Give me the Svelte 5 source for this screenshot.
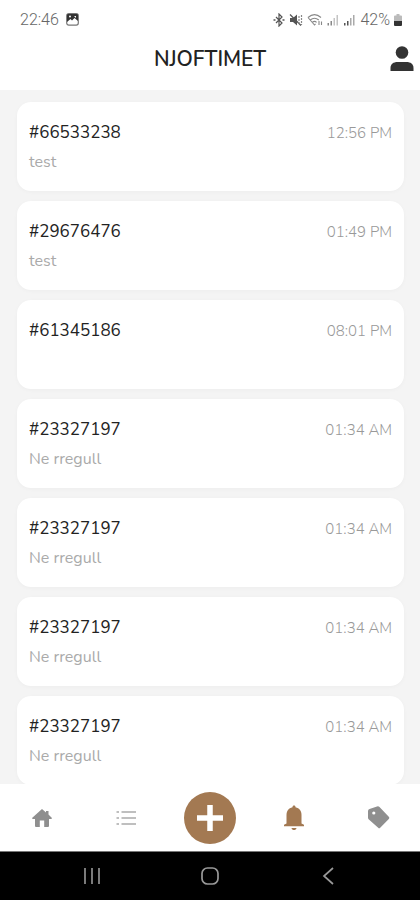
<script>
  const notices = [
    { id: '#66533238', time: '12:56 PM', text: 'test' },
    { id: '#29676476', time: '01:49 PM', text: 'test' },
    { id: '#61345186', time: '08:01 PM', text: '' },
    { id: '#23327197', time: '01:34 AM', text: 'Ne rregull' },
    { id: '#23327197', time: '01:34 AM', text: 'Ne rregull' },
    { id: '#23327197', time: '01:34 AM', text: 'Ne rregull' },
    { id: '#23327197', time: '01:34 AM', text: 'Ne rregull' }
  ];
</script>

<div class="screen">
  <div class="status">
    <span>22:46</span>
    <svg class="photo" width="13" height="13" viewBox="0 0 13 13">
      <rect x="0.7" y="0.7" width="11.6" height="11.4" rx="2" fill="#fff" stroke="#777" stroke-width="1.2" />
      <path d="M1 2a1 1 0 0 1 1-1h9a1 1 0 0 1 1 1v6L8.500 5 6 7.500 4.500 6 1 9z" fill="#333" />
      <circle cx="4" cy="3.600" r="1" fill="#fff" />
      <path d="M8 3h2v2z" fill="#fff" />
    </svg>
    <div class="signals">
      <svg width="12" height="14" viewBox="0 0 12 14" fill="none" stroke="#555" stroke-width="1.2">
        <path d="M3 4l6 6-3 3V1l3 3-6 6" />
        <path d="M0.500 7h2M9.500 7h2" stroke-width="1.6" />
      </svg>
      <svg width="14" height="14" viewBox="0 0 14 14">
        <path d="M1 5h3l4-3.500v11L4 9H1z" fill="#555" />
        <path d="M1 1.500l11 11" fill="none" stroke="#555" stroke-width="1.3" />
        <path d="M10 3v8M12.500 2v10" fill="none" stroke="#888" stroke-width="1.2" stroke-dasharray="2 1" />
      </svg>
      <svg width="16" height="14" viewBox="0 0 16 14" fill="none" stroke="#888" stroke-width="1.1">
        <path d="M1 4.500C5 1 10 1 14 4.500M3.200 7c3-2.400 5.600-2.400 8.600 0M5.400 9.300c1.500-1.200 2.800-1.200 4.200 0" />
        <path d="M1 4.500l6.500 7.500 1-1.200M12 8v4M14.500 8.500v3.500" />
      </svg>
      <svg width="12" height="14" viewBox="0 0 12 14">
        <path d="M0.500 10h1.500v2.500H0.500zM3.500 8H5v4.500H3.500z" fill="#888" />
        <path d="M6.500 5H8v7.500H6.500zM9.500 2H11v10.500H9.500z" fill="#c4c4c4" />
      </svg>
      <svg width="13" height="14" viewBox="0 0 12 14">
        <path d="M0.500 10h1.500v2.500H0.500zM3.500 8H5v4.500H3.500z" fill="#555" />
        <path d="M6.500 5H8v7.500H6.500zM9.500 2H11v10.500H9.500z" fill="#aaa" />
      </svg>
      <span>42%</span>
      <svg width="8" height="14" viewBox="0 0 8 14">
        <path d="M2.500 1h3v1.500H7a1 1 0 0 1 1 1V8H0V3.500a1 1 0 0 1 1-1h1.500z" fill="#bbb" />
        <path d="M0 8h8v4a1 1 0 0 1-1 1H1a1 1 0 0 1-1-1z" fill="#333" />
      </svg>
    </div>
  </div>

  <header>
    <h1>NJOFTIMET</h1>
    <button class="profile" aria-label="Profili">
      <svg width="24" height="26" viewBox="0 0 24 26" fill="#333">
        <circle cx="12" cy="6.500" r="6.300" />
        <path d="M0.500 25v-3c0-4 3-6 7-6h9c4 0 7 2 7 6v3z" />
      </svg>
    </button>
  </header>

  <main>
    {#each notices as n}
      <article>
        <div class="top">
          <h2>{n.id}</h2>
          <time>{n.time}</time>
        </div>
        <p>{n.text}</p>
      </article>
    {/each}
  </main>

  <nav>
    <button aria-label="Kreu">
      <svg width="20" height="18" viewBox="0 0 20 18" fill="#8f8f8f">
        <path d="M10 0l4 3.400V2h2.500v3.600L20 9l-0.600 1H17v7a1 1 0 0 1-1 1h-3.800v-6.500H7.800V18H4a1 1 0 0 1-1-1v-7H0.600L0 9z" />
      </svg>
    </button>
    <button aria-label="Lista">
      <svg width="20" height="16" viewBox="0 0 20 16" fill="none" stroke="#aaa" stroke-width="1.4">
        <path d="M0.500 2H3M5.500 2H20M0.500 8H3M5.500 8H20M0.500 14H3M5.500 14H20" />
      </svg>
    </button>
    <button class="add" aria-label="Shto">
      <svg width="28" height="28" viewBox="0 0 28 28" fill="none" stroke="#fff" stroke-width="5.500">
        <path d="M14 1v26M1 14h26" />
      </svg>
    </button>
    <button aria-label="Njoftimet">
      <svg width="22" height="26" viewBox="0 0 22 26" fill="#a37952">
        <path d="M11 0.500c1 0 1.500 0.600 1.500 1.700 4 0.800 6 3.800 6 7.800v8.500l2.500 1.300v1.400H1v-1.400l2.500-1.300V10c0-4 2-7 6-7.800 0-1.100 0.500-1.700 1.500-1.700z" />
        <path d="M8.500 23h5c-0.300 1.500-1.200 2-2.500 2s-2.200-0.500-2.500-2z" />
      </svg>
    </button>
    <button aria-label="Oferta">
      <svg width="23" height="23" viewBox="0 0 23 23">
        <path d="M1 5Q1 3.500 2.500 2.900l7.500-2.500Q11.500 0 12.500 0.900l9.500 10.100q0.800 1-0.200 2l-8.600 8.800q-1 1-2 0l-9.600-8.500Q1 12.700 1 11.500z" fill="#8f8f8f" />
        <circle cx="6.800" cy="7" r="1.600" fill="#fff" />
      </svg>
    </button>
  </nav>

  <div class="system">
    <button aria-label="Aplikacionet e fundit">
      <svg width="18" height="18" viewBox="0 0 18 18" stroke="#999" stroke-width="1.6"><path d="M2 1v16M9 1v16M16 1v16" /></svg>
    </button>
    <button aria-label="Ekrani kryesor">
      <svg width="18" height="18" viewBox="0 0 18 18" fill="none" stroke="#999" stroke-width="1.700"><rect x="1" y="1" width="16" height="16" rx="5.500" /></svg>
    </button>
    <button aria-label="Prapa">
      <svg width="18" height="18" viewBox="0 0 18 18" fill="none" stroke="#999" stroke-width="1.700"><path d="M14 1L5 9l9 8" /></svg>
    </button>
  </div>
</div>

<style>
  :global(body) {
    margin: 0;
  }
  .screen {
    height: 100vh;
    display: flex;
    flex-direction: column;
    background: #fff;
    font-family: Nunito, Inter, sans-serif;
  }
  button {
    border: 0;
    padding: 0;
    background: none;
    display: flex;
    align-items: center;
    justify-content: center;
  }
  .status {
    height: 39px;
    flex: none;
    display: flex;
    align-items: center;
    gap: 7px;
    padding: 0 18px 0 20px;
    font: 300 16px/20px Roboto, sans-serif;
    color: #666;
  }
  .signals {
    margin-left: auto;
    display: flex;
    align-items: center;
    gap: 4px;
  }
  header {
    height: 51px;
    flex: none;
    display: grid;
    grid-template-columns: 1fr auto 1fr;
    align-items: start;
    padding: 7px 6px 0;
    box-sizing: border-box;
  }
  h1 {
    grid-column: 2;
    margin: 0;
    font-size: 21px;
    line-height: 26px;
    font-weight: 600;
    color: #222;
  }
  .profile {
    justify-self: end;
  }
  main {
    flex: 1;
    min-height: 0;
    overflow: hidden;
    background: #f4f4f4;
    padding: 12px 16px 0 17px;
    display: flex;
    flex-direction: column;
    gap: 10px;
  }
  article {
    flex: none;
    height: 89px;
    box-sizing: border-box;
    padding: 20px 12px 0;
    background: #fff;
    border-radius: 14px;
    box-shadow: 0 1px 4px rgba(0, 0, 0, 0.03);
  }
  .top {
    display: flex;
    justify-content: space-between;
    align-items: center;
  }
  h2 {
    margin: 0;
    font-size: 17px;
    line-height: 22px;
    font-weight: 400;
    color: #222;
  }
  time {
    font-size: 15px;
    line-height: 22px;
    font-weight: 300;
    color: #999;
  }
  p {
    margin: 7px 0 0;
    font-size: 16px;
    line-height: 22px;
    font-weight: 400;
    color: #aaa;
  }
  nav {
    height: 67px;
    flex: none;
    display: flex;
    align-items: center;
    background: #fff;
    border-bottom: 1px solid #777;
  }
  nav button {
    flex: 1;
  }
  nav .add {
    flex: none;
    width: 52px;
    height: 52px;
    margin: 0 16px;
    border-radius: 50%;
    background: #a37952;
  }
  .system {
    height: 48px;
    flex: none;
    display: flex;
    justify-content: center;
    gap: 100px;
    background: #000;
  }
</style>
